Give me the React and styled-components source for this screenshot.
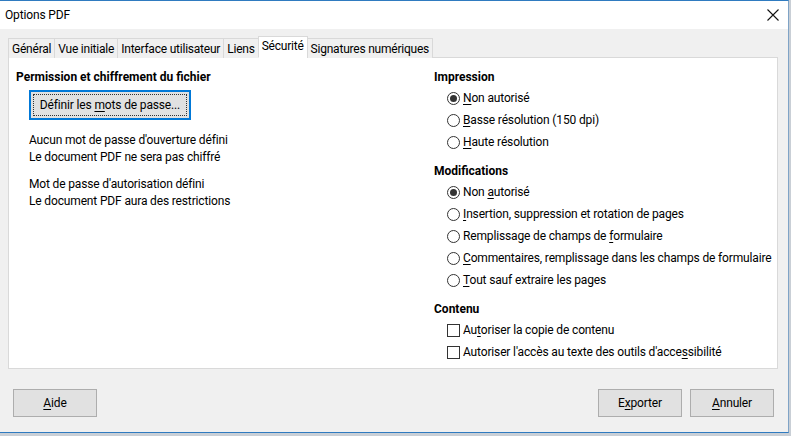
import React from "react";
import styled, { createGlobalStyle } from "styled-components";

const Global = createGlobalStyle`
  html, body { margin: 0; padding: 0; background: #c9cfd6; }
  body { font-family: Roboto, "Noto Sans", sans-serif; font-size: 12px; letter-spacing: -0.15px; color: #000; }
`;

const Window = styled.div`
  width: 788px;
  height: 431px;
  background: #f0f0f0;
  border-top: 1px solid #2f7bc0;
  border-right: 1px solid #7fa3c6;
  border-bottom: 1px solid #2f7bc0;
  display: flex;
  flex-direction: column;
`;

const TitleBar = styled.div`
  height: 28px;
  background: #fff;
  display: flex;
  align-items: center;
  justify-content: space-between;
  padding: 0 9px 0 5px;
  font-size: 12px;
`;

const Close = styled.svg`
  width: 12px;
  height: 12px;
`;

const Body = styled.div`
  flex: 1;
  display: flex;
  flex-direction: column;
  padding: 7px 10px 0 8px;
`;

const TabRow = styled.div`
  display: flex;
  align-items: flex-end;
  height: 22px;
  position: relative;
  z-index: 1;
`;

const Tab = styled.div`
  height: ${(p) => (p.$active ? "22px" : "20px")};
  box-sizing: border-box;
  padding: ${(p) => (p.$active ? "0 3px 2px" : "0 3px")};
  border: 1px solid #d9d9d9;
  border-bottom: ${(p) => (p.$active ? "1px solid #fff" : "none")};
  margin-left: -1px;
  background: ${(p) => (p.$active ? "#fff" : "#f0f0f0")};
  display: flex;
  align-items: center;
  white-space: nowrap;
  letter-spacing: -0.22px;
  &:first-child { margin-left: 0; }
`;

const Panel = styled.div`
  height: 312px;
  box-sizing: border-box;
  background: #fff;
  border: 1px solid #d9d9d9;
  margin-top: -1px;
  display: flex;
  padding: 9px 0 0 7px;
`;

const LeftCol = styled.div`
  width: 418px;
  display: flex;
  flex-direction: column;
`;

const RightCol = styled.div`
  flex: 1;
  display: flex;
  flex-direction: column;
`;

const Heading = styled.div`
  font-weight: bold;
  letter-spacing: 0;
  height: 20px;
  line-height: 20px;
  margin-top: ${(p) => p.$gap || 0}px;
`;

const FocusButton = styled.div`
  margin: 3px 0 0 13px;
  width: 162px;
  height: 30px;
  box-sizing: border-box;
  border: 2px solid #0078d7;
  background: #e1e1e1;
  padding: 2px;
  display: flex;
`;

const FocusRect = styled.div`
  flex: 1;
  border: 1px dotted #333;
  display: flex;
  align-items: center;
  justify-content: center;
`;

const InfoBlock = styled.div`
  margin: ${(p) => p.$top}px 0 0 13px;
  line-height: 17px;
`;

const Row = styled.div`
  height: 22px;
  display: flex;
  align-items: center;
  padding-left: 13px;
  gap: 3px;
  white-space: nowrap;
`;

const Radio = styled.span`
  width: 13px;
  height: 13px;
  flex: none;
  box-sizing: border-box;
  border: 1px solid #333;
  border-radius: 50%;
  display: flex;
  align-items: center;
  justify-content: center;
  &::after {
    content: "";
    width: 7px;
    height: 7px;
    border-radius: 50%;
    background: ${(p) => (p.$checked ? "#333" : "transparent")};
  }
`;

const Check = styled.span`
  width: 13px;
  height: 13px;
  flex: none;
  box-sizing: border-box;
  border: 1px solid #333;
  background: #fff;
`;

const Footer = styled.div`
  display: flex;
  align-items: center;
  padding: 20px 4px 0 5px;
  gap: 8px;
`;

const Spacer = styled.div`
  flex: 1;
`;

const Button = styled.div`
  width: 84px;
  height: 28px;
  box-sizing: border-box;
  border: 1px solid #adadad;
  background: #e1e1e1;
  display: flex;
  align-items: center;
  justify-content: center;
`;

const U = styled.span`
  text-decoration: underline;
  text-underline-offset: 2px;
`;

function Option({ checked, children }) {
  return (
    <Row>
      <Radio $checked={checked} />
      <span>{children}</span>
    </Row>
  );
}

function CheckOption({ children }) {
  return (
    <Row>
      <Check />
      <span>{children}</span>
    </Row>
  );
}

export default function App() {
  const tabs = ["Général", "Vue initiale", "Interface utilisateur", "Liens", "Sécurité", "Signatures numériques"];
  return (
    <>
      <Global />
      <Window>
        <TitleBar>
          <span>Options PDF</span>
          <Close viewBox="0 0 12 12">
            <path d="M0.5 0.5 L11.5 11.5 M11.5 0.5 L0.5 11.5" stroke="#111" strokeWidth="1.1" fill="none" />
          </Close>
        </TitleBar>
        <Body>
          <TabRow>
            {tabs.map((t) => (
              <Tab key={t} $active={t === "Sécurité"}>{t}</Tab>
            ))}
          </TabRow>
          <Panel>
            <LeftCol>
              <Heading>Permission et chiffrement du fichier</Heading>
              <FocusButton>
                <FocusRect>
                  <span>Définir les <U>m</U>ots de passe...</span>
                </FocusRect>
              </FocusButton>
              <InfoBlock $top={12}>
                <div>Aucun mot de passe d'ouverture défini</div>
                <div>Le document PDF ne sera pas chiffré</div>
              </InfoBlock>
              <InfoBlock $top={10}>
                <div>Mot de passe d'autorisation défini</div>
                <div>Le document PDF aura des restrictions</div>
              </InfoBlock>
            </LeftCol>
            <RightCol>
              <Heading>Impression</Heading>
              <Option checked><U>N</U>on autorisé</Option>
              <Option><U>B</U>asse résolution (150 dpi)</Option>
              <Option><U>H</U>aute résolution</Option>
              <Heading $gap={8}>Modifications</Heading>
              <Option checked>Non <U>a</U>utorisé</Option>
              <Option><U>I</U>nsertion, suppression et rotation de pages</Option>
              <Option>Remplissage de champs de <U>f</U>ormulaire</Option>
              <Option><U>C</U>ommentaires, remplissage dans les champs de formulaire</Option>
              <Option><U>T</U>out sauf extraire les pages</Option>
              <Heading $gap={8}>Contenu</Heading>
              <CheckOption>Au<U>t</U>oriser la copie de contenu</CheckOption>
              <CheckOption>Autoriser l'accès au texte des outils d'acce<U>s</U>sibilité</CheckOption>
            </RightCol>
          </Panel>
          <Footer>
            <Button><span><U>A</U>ide</span></Button>
            <Spacer />
            <Button>E<U>x</U>porter</Button>
            <Button><U>A</U>nnuler</Button>
          </Footer>
        </Body>
      </Window>
    </>
  );
}
